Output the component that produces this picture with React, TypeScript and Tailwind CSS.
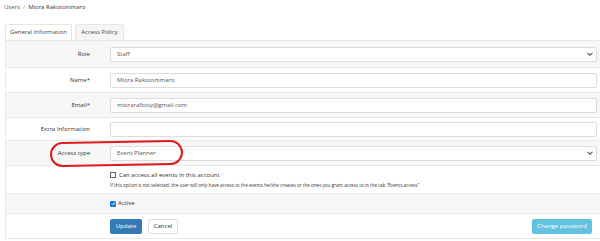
import React from "react";

const Chevron = () => (
    <svg width="6" height="4" viewBox="0 0 6 4" className="absolute right-[3px] top-1/2 -translate-y-1/2">
        <path d="M0.5 0.8 L3 3.2 L5.5 0.8" stroke="#555" strokeWidth="1.1" fill="none" />
    </svg>
);

const Row: React.FC<{ label?: string; gray?: boolean; h: string; children: React.ReactNode }> = ({ label, gray, h, children }) => (
    <div className={`flex items-center border-b border-[#e8e8e8] ${h} ${gray ? "bg-[#f7f7f7]" : "bg-white"}`}>
        <div className="w-[104px] shrink-0 pr-[20px] text-right text-[6px] text-[#333]">{label}</div>
        <div className="flex-1 pr-[3px]">{children}</div>
    </div>
);

const Field: React.FC<{ value?: string; select?: boolean; h?: string }> = ({ value, select, h = "h-[15px]" }) => (
    <div className={`relative flex items-center ${h} rounded-[2px] border border-[#dcdcdc] bg-white pl-[6px] text-[6px] text-[#555]`}>
        {value}
        {select && <Chevron />}
    </div>
);

const App: React.FC = () => {
    return (
        <div className="relative h-[241px] w-[600px] overflow-hidden bg-white font-['Open_Sans',sans-serif]">
            <div className="flex h-[15px] items-center pl-[4px] text-[6px] text-[#333]">
                <span className="text-[#555]">Users</span>
                <span className="mx-[3px] text-[#999]">/</span>
                <span>Miora Rakotonimaro</span>
            </div>
            <div className="ml-[5px] mt-[9px] flex h-[17px] gap-[3px] border-b border-[#e5e5e5]">
                <div className="flex w-[67px] items-center justify-center rounded-t-[2px] border border-b-0 border-[#e5e5e5] bg-white text-[6px] text-[#444]">General Information</div>
                <div className="flex w-[49px] items-center justify-center rounded-t-[2px] border border-b-0 border-[#e5e5e5] bg-[#f5f5f5] text-[6px] text-[#444]">Access Policy</div>
            </div>
            <div className="ml-[5px] border-l border-b border-[#e8e8e8]">
                <Row label="Role" gray h="h-[27px]"><Field value="Staff" select /></Row>
                <Row label="Name*" h="h-[25px]"><Field value="Miora Rakotonimaro" /></Row>
                <Row label="Email*" gray h="h-[25px]"><Field value="miorarafotsy@gmail.com" /></Row>
                <Row label="Extra Information" h="h-[23px]"><Field /></Row>
                <Row label="Access type" gray h="h-[25px]"><Field value="Event Planner" select /></Row>
                <div className="flex h-[28px] flex-col justify-center border-b border-[#e8e8e8] pl-[104px]">
                    <label className="flex items-center gap-[3px] text-[6px] text-[#333]">
                        <span className="inline-block h-[6px] w-[6px] border border-[#666] bg-white" />
                        Can access all events in this account
                    </label>
                    <div className="mt-[2px] text-[4.6px] text-[#333]">
                        If this option is not selected, the user will only have access to the events he/she creates or the ones you grant access to in the tab "Events access"
                    </div>
                </div>
                <div className="flex h-[20px] items-center border-b border-[#e8e8e8] bg-[#f7f7f7] pl-[104px]">
                    <label className="flex items-center gap-[2px] text-[6px] text-[#333]">
                        <span className="flex h-[6px] w-[6px] items-center justify-center rounded-[1px] bg-[#1a73e8]">
                            <svg width="5" height="5" viewBox="0 0 5 5"><path d="M1 2.6 L2.1 3.7 L4 1.3" stroke="#fff" strokeWidth="1" fill="none" /></svg>
                        </span>
                        Active
                    </label>
                </div>
                <div className="flex h-[24px] items-center pl-[104px] pr-[8px]">
                    <button className="h-[15px] w-[32px] rounded-[2px] bg-[#337ab7] text-[6px] text-white">Update</button>
                    <button className="ml-[6px] h-[15px] w-[30px] rounded-[2px] border border-[#ddd] bg-white text-[6px] text-[#333]">Cancel</button>
                    <button className="ml-auto h-[15px] w-[60px] rounded-[2px] bg-[#62c3e0] text-[6px] text-white">Change password</button>
                </div>
            </div>
            <div className="pointer-events-none absolute left-[50px] top-[141px] h-[25px] w-[133px] -rotate-1 rounded-[13px] border-2 border-[#e0191d]" />
        </div>
    );
};

export default App;
